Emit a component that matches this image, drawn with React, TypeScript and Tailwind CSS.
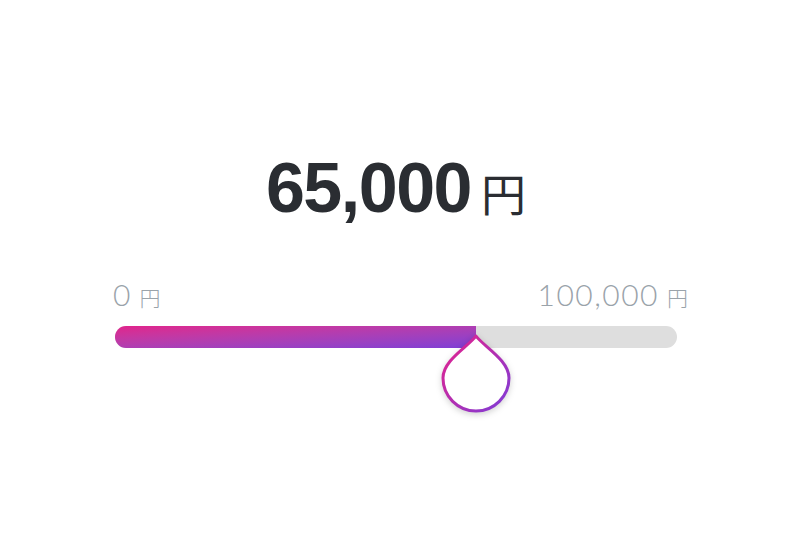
import { useState } from "react";

const MAX = 100000;

function Drop() {
  return (
    <svg
      width="76"
      height="86"
      viewBox="0 0 76 86"
      className="drop-shadow-[0_2px_3px_rgba(0,0,0,0.18)]"
    >
      <defs>
        <linearGradient id="dropStroke" x1="0" y1="0" x2="1" y2="1">
          <stop offset="0%" stopColor="#e8218a" />
          <stop offset="100%" stopColor="#7e3cd8" />
        </linearGradient>
      </defs>
      <path
        d="M38 4 C 45 14, 71 28, 71 46 A 33 33 0 0 1 5 46 C 5 28, 31 14, 38 4 Z"
        fill="#ffffff"
        stroke="url(#dropStroke)"
        strokeWidth="3"
        strokeLinejoin="round"
      />
    </svg>
  );
}

export default function App() {
  const [value] = useState(65000);
  const pct = (value / MAX) * 100;

  return (
    <div className="w-[792px] h-[553px] bg-white flex flex-col items-center pt-[153px] font-['Liberation_Sans',sans-serif]">
      {/* amount */}
      <div className="flex items-baseline gap-[10px] text-[#2a2d32] leading-none">
        <span className="text-[70px] font-bold tracking-[-1.5px]">
          {value.toLocaleString("en-US")}
        </span>
        <span className="text-[45px] font-['Noto_Sans_CJK_JP',sans-serif]">円</span>
      </div>

      {/* slider */}
      <div className="w-[562px] mt-[56px]">
        <div className="flex justify-between items-baseline text-[#9aa3aa] leading-none -ml-[2px] -mr-[11px] font-['Lato',sans-serif] font-light">
          <div className="flex items-baseline gap-[8px]">
            <span className="text-[30px] tracking-[1px]">0</span>
            <span className="text-[21px] font-['Noto_Sans_CJK_JP',sans-serif]">円</span>
          </div>
          <div className="flex items-baseline gap-[8px]">
            <span className="text-[30px] tracking-[1.5px]">100,000</span>
            <span className="text-[21px] font-['Noto_Sans_CJK_JP',sans-serif]">円</span>
          </div>
        </div>

        <div className="relative mt-[17px] h-[22px] rounded-full bg-[#dedede]">
          <div
            className="h-full rounded-l-full bg-gradient-to-br from-[#e1218b] to-[#7f3dd6]"
            style={{ width: `calc(${pct}% - 4px)` }}
          />
          <div
            className="absolute top-[6px] -translate-x-1/2"
            style={{ left: `calc(${pct}% - 4px)` }}
          >
            <Drop />
          </div>
        </div>
      </div>
    </div>
  );
}
